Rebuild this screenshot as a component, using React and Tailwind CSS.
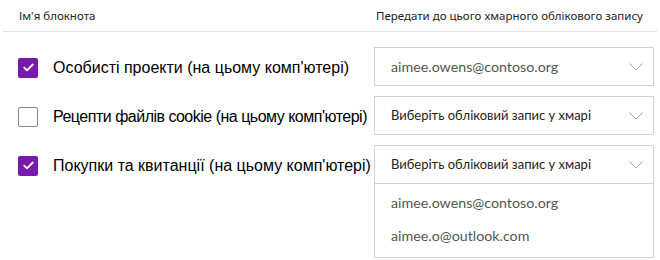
const rows = [
  { name: 'Особисті проекти (на цьому комп\'ютері)', checked: true, account: 'aimee.owens@contoso.org', track: '' },
  { name: 'Рецепти файлів cookie (на цьому комп\'ютері)', checked: false, account: null, track: 'tracking-[-0.5px]' },
  { name: 'Покупки та квитанції (на цьому комп\'ютері)', checked: true, account: null, open: true, track: '' },
]

const accounts = ['aimee.owens@contoso.org', 'aimee.o@outlook.com']

const Checkbox = ({ checked }) =>
  checked ? (
    <div className="flex h-5 w-5 shrink-0 items-center justify-center rounded-[2px] bg-[#7719aa]">
      <svg width="11" height="9" viewBox="0 0 11 9" fill="none">
        <path d="M1.2 4.6 L4 7.3 L9.8 1.5" stroke="white" strokeWidth="1.8" strokeLinecap="round" strokeLinejoin="round" />
      </svg>
    </div>
  ) : (
    <div className="h-5 w-5 shrink-0 rounded-[2px] border border-[#8a8a8a] bg-white" />
  )

const Chevron = () => (
  <svg width="14" height="8" viewBox="0 0 14 8" fill="none" className="mr-[10px]">
    <path d="M0.5 0.5 L7 7 L13.5 0.5" stroke="#a6a6a6" strokeWidth="1" />
  </svg>
)

const Select = ({ value, placeholder }) => (
  <div className="flex h-[37px] items-center justify-between pl-[16px]">
    {value ? (
      <span className="text-[14.25px] text-[#555]">{value}</span>
    ) : (
      <span className="text-[13px] text-[#222]">{placeholder}</span>
    )}
    <Chevron />
  </div>
)

export default function App() {
  return (
    <div className="h-[260px] w-[660px] bg-white font-['Lato','Noto_Sans',sans-serif]">
      <div className="mx-[3px] flex h-[32px] items-center border-b border-[#dedede] font-['Noto_Sans',sans-serif] text-[11.5px] text-[#222]">
        <span className="ml-[16px] w-[357px]">Ім'я блокнота</span>
        <span>Передати до цього хмарного облікового запису</span>
      </div>
      <div className="mt-[15px] flex flex-col gap-[10px]">
        {rows.map((row, i) => (
          <div key={i} className="flex items-start">
            <div className={`flex h-[38px] w-[374px] items-center gap-[15px] pl-[18px] pt-[3px] font-['Liberation_Sans',sans-serif] text-[16px] text-black ${row.track}`}>
              <Checkbox checked={row.checked} />
              <span className="whitespace-nowrap">{row.name}</span>
            </div>
            <div className="w-[280px] border border-[#d2d2d2] bg-white">
              <Select value={row.account} placeholder="Виберіть обліковий запис у хмарі" />
              {row.open && (
                <div className="border-t border-[#d2d2d2] pb-[5px] pt-[2px]">
                  {accounts.map((a) => (
                    <div key={a} className="flex h-[33px] items-center pl-[16px] text-[14.25px] text-[#555]">
                      {a}
                    </div>
                  ))}
                </div>
              )}
            </div>
          </div>
        ))}
      </div>
    </div>
  )
}
